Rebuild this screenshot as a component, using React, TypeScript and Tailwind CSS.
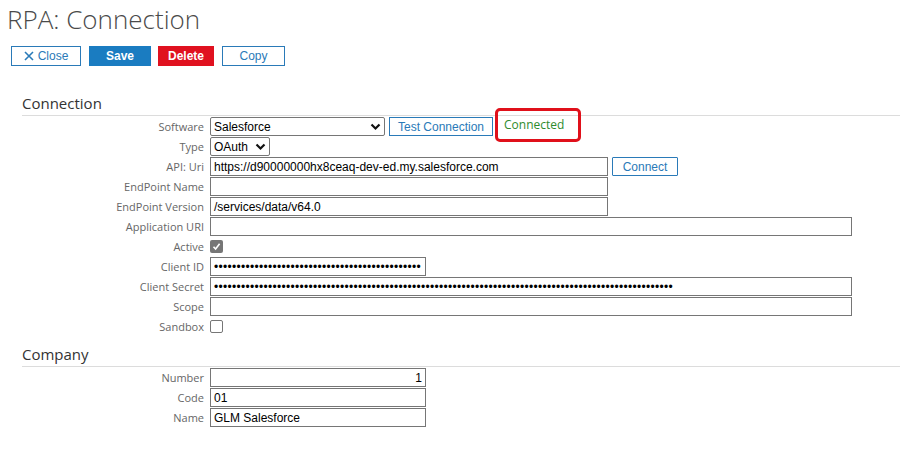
import React from "react";

const label = "w-[210px] pr-[6px] text-right text-[11px] text-[#666] leading-none";
const field =
  "h-[19px] border border-[#767676] bg-white px-[3px] flex items-center text-black font-['Liberation_Sans',Arial,sans-serif] whitespace-nowrap";
const box = field + " text-[12px] overflow-hidden";
const dots = field + " text-[12px] leading-none tracking-[0.3px]";

function Chevron() {
  return (
    <svg width="11" height="8" viewBox="0 0 11 8">
      <path d="M1.5 1.5 L5.5 5.5 L9.5 1.5" fill="none" stroke="#111" strokeWidth="2.2" />
    </svg>
  );
}

function Row({ name, children }: { name: string; children: React.ReactNode }) {
  return (
    <div className="flex items-center h-[19px]">
      <div className={label}>{name}</div>
      {children}
    </div>
  );
}

function Heading({ text }: { text: string }) {
  return (
    <div className="ml-[22px] border-b border-[#dcdcdc] text-[15px] text-[#333] leading-[20px] pb-[2px]">
      {text}
    </div>
  );
}

export default function App() {
  const idDots = "•".repeat(46);
  const secretDots = "•".repeat(102);
  return (
    <div className="w-[900px] h-[453px] bg-white font-['Open_Sans',sans-serif] relative overflow-hidden">
      <h1 className="pl-[7px] pt-[2px] text-[26px] font-light text-[#4a4a4a] leading-[34px]">
        RPA: Connection
      </h1>
      <div className="flex gap-[7px] pl-[11px] mt-[10px] font-['Liberation_Sans',Arial,sans-serif] text-[12px]">
        <button className="w-[70px] h-[20px] border border-[#2a7ab8] text-[#2a7ab8] flex items-center justify-center gap-[4px]">
          <svg width="10" height="10" viewBox="0 0 10 10">
            <path d="M1 1 L9 9 M9 1 L1 9" stroke="#2a7ab8" strokeWidth="1.6" />
          </svg>
          Close
        </button>
        <button className="w-[62px] h-[20px] bg-[#1a7cc1] text-white font-bold ml-[1px]">Save</button>
        <button className="w-[56px] h-[20px] bg-[#e0111f] text-white font-bold">Delete</button>
        <button className="w-[63px] h-[20px] border border-[#2a7ab8] text-[#2a7ab8] ml-[1px]">Copy</button>
      </div>

      <div className="mt-[27px]">
        <Heading text="Connection" />
        <div className="flex flex-col gap-[1px] mt-[1px]">
          <Row name="Software">
            <div className={box + " w-[175px] justify-between rounded-[2px]"}>
              <span>Salesforce</span>
              <Chevron />
            </div>
            <button className="ml-[4px] w-[104px] h-[19px] border border-[#2a7ab8] text-[#2a7ab8] text-[12px] font-['Liberation_Sans',Arial,sans-serif]">
              Test Connection
            </button>
          </Row>
          <Row name="Type">
            <div className={box + " w-[60px] justify-between rounded-[2px]"}>
              <span>OAuth</span>
              <Chevron />
            </div>
          </Row>
          <Row name="API: Uri">
            <div className={box + " w-[398px]"}>https://d90000000hx8ceaq-dev-ed.my.salesforce.com</div>
            <button className="ml-[4px] w-[66px] h-[19px] border border-[#2a7ab8] text-[#2a7ab8] text-[12px] font-['Liberation_Sans',Arial,sans-serif] rounded-[1px]">
              Connect
            </button>
          </Row>
          <Row name="EndPoint Name">
            <div className={box + " w-[398px]"}></div>
          </Row>
          <Row name="EndPoint Version">
            <div className={box + " w-[398px]"}>/services/data/v64.0</div>
          </Row>
          <Row name="Application URI">
            <div className={box + " w-[642px]"}></div>
          </Row>
          <Row name="Active">
            <div className="w-[13px] h-[13px] rounded-[2px] bg-[#767676] flex items-center justify-center">
              <svg width="9" height="9" viewBox="0 0 9 9">
                <path d="M1.5 4.8 L3.6 7 L7.6 1.8" fill="none" stroke="#fff" strokeWidth="1.6" />
              </svg>
            </div>
          </Row>
          <Row name="Client ID">
            <div className={dots + " w-[216px]"}>{idDots}</div>
          </Row>
          <Row name="Client Secret">
            <div className={dots + " w-[642px]"}>{secretDots}</div>
          </Row>
          <Row name="Scope">
            <div className={box + " w-[642px]"}></div>
          </Row>
          <Row name="Sandbox">
            <div className="w-[13px] h-[13px] rounded-[2px] border border-[#767676] bg-white"></div>
          </Row>
        </div>
      </div>

      <div className="mt-[8px]">
        <Heading text="Company" />
        <div className="flex flex-col gap-[1px] mt-[1px]">
          <Row name="Number">
            <div className={box + " w-[216px] justify-end"}>1</div>
          </Row>
          <Row name="Code">
            <div className={box + " w-[216px]"}>01</div>
          </Row>
          <Row name="Name">
            <div className={box + " w-[216px]"}>GLM Salesforce</div>
          </Row>
        </div>
      </div>

      {/* highlight around the status text */}
      <div className="absolute left-[495px] top-[108px] w-[86px] h-[34px] border-[3px] border-[#e0101a] rounded-[5px] pl-[6px] pt-[6px] text-[12px] text-[#2e8b2e] leading-[16px]">
        Connected
      </div>
    </div>
  );
}
